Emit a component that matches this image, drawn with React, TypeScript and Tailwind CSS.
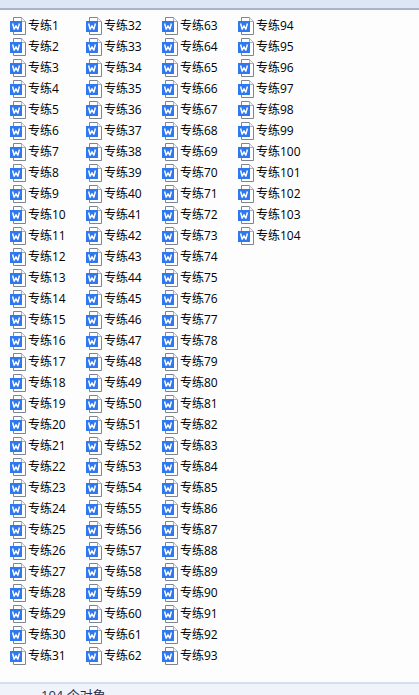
const names = Array.from({ length: 104 }, (_, i) => `专练${i + 1}`);

function WordIcon() {
  return (
    <svg width="16" height="18" viewBox="0 0 16 18" className="shrink-0">
      <path d="M3.5 0.5H11.5L15.5 4.5V17.5H3.5Z" fill="#fff" stroke="#7f858e" />
      <path d="M11.5 0.5V4.5H15.5" fill="#f3f5f8" stroke="#a9aeb6" />
      <rect x="0" y="4" width="12" height="11" fill="#2f78f0" />
      <path d="M2.6 6.5L4.2 12.5L6 8.5L7.8 12.5L9.4 6.5" fill="none" stroke="#fff" strokeWidth="1.4" strokeLinejoin="bevel" />
    </svg>
  );
}

export default function App() {
  return (
    <div className="flex h-[695px] w-[419px] flex-col overflow-hidden bg-white font-['Open_Sans','Noto_Sans_CJK_SC',sans-serif] text-[12px] text-black">
      <div className="h-[10px] shrink-0 border-b-2 border-[#aab4c6] bg-[#dce6f5]" />
      <div className="grid flex-1 auto-cols-[76px] grid-flow-col grid-rows-[repeat(31,21px)] content-start bg-[#fdfdfe] pl-[10px] pt-[5px]">
        {names.map((name) => (
          <div key={name} className="flex items-center gap-[2px] leading-none">
            <WordIcon />
            <span>{name}</span>
          </div>
        ))}
      </div>
      <div className="h-[13px] shrink-0 border-t-2 border-[#d3deef] bg-[#f0f4fa] pl-[41px] pt-[3px] text-[13px] leading-[16px] text-[#1e2f4d]">
        104 个对象
      </div>
    </div>
  );
}
